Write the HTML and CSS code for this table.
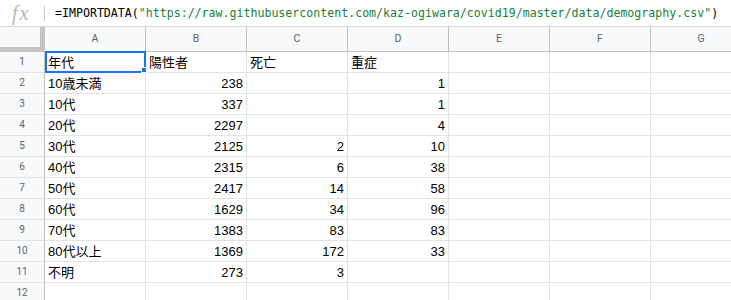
FILE: index.html
```html
<!DOCTYPE html>
<html lang="ja">
<head>
<meta charset="utf-8">
<title>demography</title>
<link rel="stylesheet" href="styles.css">
</head>
<body>
<div class="fbar">
  <div class="fx">fx</div>
  <div class="sep"></div>
  <div class="formula">=IMPORTDATA(<span class="str">"https://raw.githubusercontent.com/kaz-ogiwara/covid19/master/data/demography.csv"</span>)</div>
</div>
<div class="sheet">
  <div class="corner"></div>
  <div class="ch">A</div><div class="ch">B</div><div class="ch">C</div><div class="ch">D</div><div class="ch">E</div><div class="ch">F</div><div class="ch">G</div>

  <div class="rh">1</div><div class="c">年代</div><div class="c">陽性者</div><div class="c">死亡</div><div class="c">重症</div><div class="c"></div><div class="c"></div><div class="c"></div>
  <div class="rh">2</div><div class="c">10歳未満</div><div class="c n">238</div><div class="c n"></div><div class="c n">1</div><div class="c"></div><div class="c"></div><div class="c"></div>
  <div class="rh">3</div><div class="c">10代</div><div class="c n">337</div><div class="c n"></div><div class="c n">1</div><div class="c"></div><div class="c"></div><div class="c"></div>
  <div class="rh">4</div><div class="c">20代</div><div class="c n">2297</div><div class="c n"></div><div class="c n">4</div><div class="c"></div><div class="c"></div><div class="c"></div>
  <div class="rh">5</div><div class="c">30代</div><div class="c n">2125</div><div class="c n">2</div><div class="c n">10</div><div class="c"></div><div class="c"></div><div class="c"></div>
  <div class="rh">6</div><div class="c">40代</div><div class="c n">2315</div><div class="c n">6</div><div class="c n">38</div><div class="c"></div><div class="c"></div><div class="c"></div>
  <div class="rh">7</div><div class="c">50代</div><div class="c n">2417</div><div class="c n">14</div><div class="c n">58</div><div class="c"></div><div class="c"></div><div class="c"></div>
  <div class="rh">8</div><div class="c">60代</div><div class="c n">1629</div><div class="c n">34</div><div class="c n">96</div><div class="c"></div><div class="c"></div><div class="c"></div>
  <div class="rh">9</div><div class="c">70代</div><div class="c n">1383</div><div class="c n">83</div><div class="c n">83</div><div class="c"></div><div class="c"></div><div class="c"></div>
  <div class="rh">10</div><div class="c">80代以上</div><div class="c n">1369</div><div class="c n">172</div><div class="c n">33</div><div class="c"></div><div class="c"></div><div class="c"></div>
  <div class="rh">11</div><div class="c">不明</div><div class="c n">273</div><div class="c n">3</div><div class="c n"></div><div class="c"></div><div class="c"></div><div class="c"></div>
  <div class="rh">12</div><div class="c"></div><div class="c"></div><div class="c"></div><div class="c"></div><div class="c"></div><div class="c"></div><div class="c"></div>

  <div class="sel"></div>
  <div class="handle"></div>
</div>
</body>
</html>
```

FILE: styles.css
```css
html, body {
  margin: 0;
  padding: 0;
}
body {
  width: 731px;
  height: 300px;
  overflow: hidden;
  background: #fff;
  font-family: "Liberation Sans", "Noto Sans CJK JP", sans-serif;
}
.fbar {
  height: 26px;
  border-bottom: 1px solid #dadce0;
  display: flex;
  align-items: center;
}
.fx {
  width: 32px;
  padding-left: 12px;
  font-family: "Liberation Serif", serif;
  font-style: italic;
  font-size: 20px;
  letter-spacing: 2px;
  color: #b4b4b4;
  line-height: 26px;
}
.sep {
  width: 1px;
  height: 15px;
  background: #c7c7c7;
}
.formula {
  margin-left: 10px;
  font-family: "DejaVu Sans Mono", "Liberation Mono", monospace;
  font-size: 11.6px;
  color: #000;
  white-space: nowrap;
}
.str {
  color: #188038;
}
.sheet {
  position: relative;
  display: grid;
  grid-template-columns: 45px repeat(7, 101px);
  grid-template-rows: 25px;
  grid-auto-rows: 21px;
}
.sheet > div {
  box-sizing: border-box;
}
.corner {
  background: #f8f9fa;
  border-right: 5px solid #c4c4c4;
  border-bottom: 5px solid #c4c4c4;
}
.ch {
  background: #f8f9fa;
  border-right: 1px solid #c0c0c0;
  border-bottom: 1px solid #c0c0c0;
  color: #5f6368;
  font-family: Roboto, "Liberation Sans", sans-serif;
  font-size: 10.5px;
  line-height: 24px;
  text-align: center;
}
.rh {
  background: #f8f9fa;
  border-right: 1px solid #c0c0c0;
  border-bottom: 1px solid #e2e3e3;
  color: #5f6368;
  font-family: Roboto, "Liberation Sans", sans-serif;
  font-size: 10px;
  line-height: 20px;
  text-align: center;
}
.c {
  border-right: 1px solid #e2e3e3;
  border-bottom: 1px solid #e2e3e3;
  padding: 0 3px;
  font-size: 13px;
  line-height: 21px;
  color: #000;
  white-space: nowrap;
  overflow: hidden;
}
.n {
  text-align: right;
}
.sel {
  position: absolute;
  left: 45px;
  top: 24px;
  width: 101px;
  height: 22px;
  border: 2px solid #1a73e8;
  pointer-events: none;
}
.handle {
  position: absolute;
  left: 141px;
  top: 40px;
  width: 6px;
  height: 6px;
  background: #1a73e8;
  border: 1px solid #fff;
  box-sizing: content-box;
}
```
